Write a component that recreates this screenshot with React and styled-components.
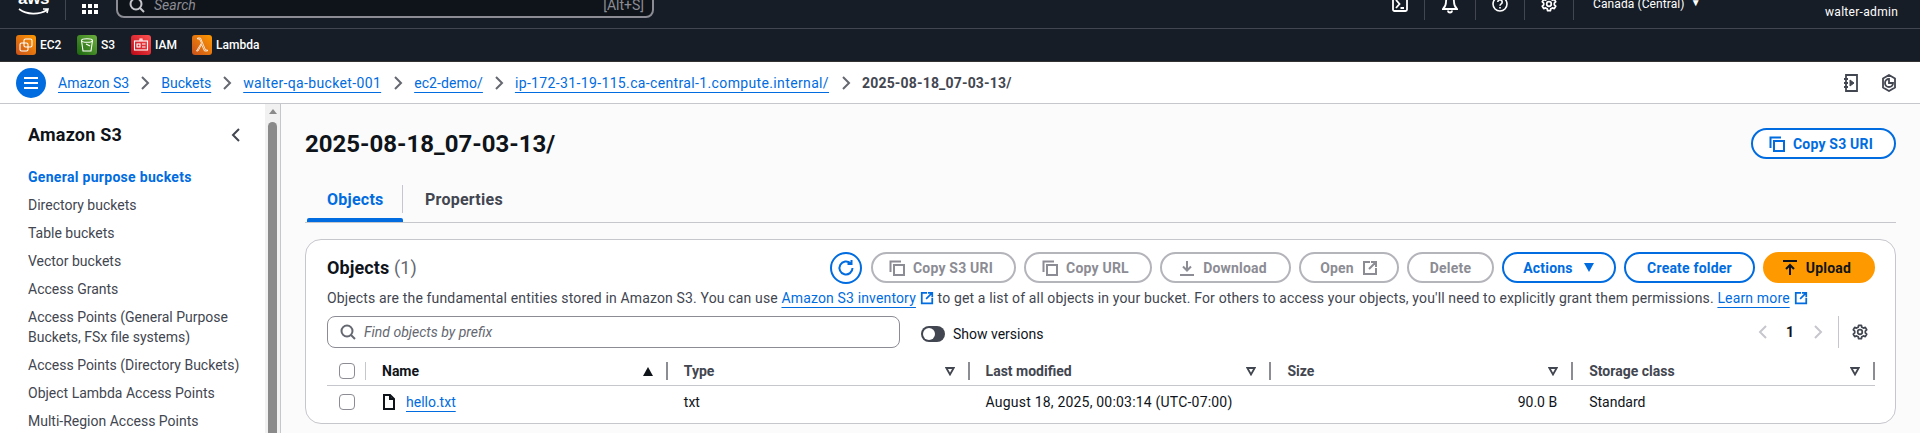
import React from 'react';
import styled, { createGlobalStyle } from 'styled-components';

const Global = createGlobalStyle`
  html, body { margin: 0; padding: 0; height: 433px; overflow: hidden; background: #fff; }
  body { font-family: Roboto, "Noto Sans", sans-serif; font-size: 14px; line-height: 20px; color: #0f141a; }
  * { box-sizing: border-box; }
`;

const Shell = styled.div`display: flex; flex-direction: column; height: 445px; margin-top: -12px; overflow: hidden;`;

const TopBar = styled.header`
  height: 41px; flex: none; background: #161d26; border-bottom: 1px solid #424650; display: flex; align-items: flex-start; color: #fff; font-size: 12px; position: relative;
`;
const LogoBox = styled.div`width: 66px; height: 32px; flex: none; border-right: 1px solid #424650; position: relative; padding-left: 18px;`;
const LogoText = styled.span`display: block; width: 30px; font-family: "Liberation Sans", sans-serif; font-weight: 700; font-size: 17px; line-height: 14px; letter-spacing: -.3px; margin-top: 4px; color: #fff;`;
const GridBtn = styled.div`width: 50px; flex: none; padding: 14px 0 0 16px;`;
const SearchBox = styled.div`
  width: 538px; height: 30px; flex: none; background: #0f141a; border: 2px solid #8c8c94; border-radius: 8px; display: flex; align-items: center; padding: 3px 8px 0 11px; gap: 9px; color: #8c8c94;
`;
const SearchHint = styled.span`font-style: italic; font-size: 14px; flex: 1; color: #8c8c94;`;
const SearchKey = styled.span`font-size: 14px;`;
const TopRight = styled.div`margin-left: auto; display: flex; align-items: flex-start;`;
const TopIcon = styled.div`width: ${p => p.$w}px; height: 32px; border-right: 1px solid #424650; display: flex; justify-content: center; padding-top: 8px;`;
const Region = styled.div`width: 251px; padding: 6px 0 0 19px; display: flex; gap: 6px; line-height: 20px; letter-spacing: .1px;`;
const Caret = styled.span`font-size: 10px; line-height: 18px;`;
const UserName = styled.div`width: 95px; padding: 14px 0 0 0; line-height: 20px; letter-spacing: .3px; white-space: nowrap;`;

const ServiceBar = styled.nav`height: 32px; flex: none; background: #161d26; display: flex; align-items: center; padding-left: 16px;`;
const Service = styled.div`display: flex; align-items: center; gap: 4px; width: ${p => p.$w}px; color: #fff; font-size: 12px; font-weight: 500;`;
const Tile = styled.span`width: 20px; height: 20px; border-radius: 3px; background: linear-gradient(45deg, ${p => p.$a}, ${p => p.$b}); display: flex; align-items: center; justify-content: center; flex: none;`;

const Crumbs = styled.div`height: 43px; flex: none; background: #fff; border-bottom: 1px solid #c6c6cd; border-top: 1px solid #333; display: flex; align-items: center; padding: 0 23px 0 16px;`;
const MenuBtn = styled.span`width: 30px; height: 30px; border-radius: 50%; background: #006ce0; display: flex; align-items: center; justify-content: center; flex: none; margin-right: 12px;`;
const Crumb = styled.a`color: #006ce0; text-decoration: underline; text-underline-offset: 4px; text-decoration-thickness: 1px; white-space: nowrap; letter-spacing: ${p => p.$ls}px;`;
const CrumbNow = styled.span`color: #424650; font-weight: 700; white-space: nowrap; letter-spacing: .18px;`;
const CrumbSep = styled.span`display: flex; width: ${p => p.$w || 32}px; justify-content: center; flex: none;`;
const CrumbTools = styled.div`margin-left: auto; display: flex; gap: 22px;`;

const Body = styled.div`flex: 1; display: flex; min-height: 0; background: #fbfbfb;`;
const Side = styled.aside`width: 281px; flex: none; display: flex; background: #fff; border-right: 1px solid #c6c6cd; overflow: hidden;`;
const SideInner = styled.div`width: 265px; flex: none; padding: 19px 0 0 28px;`;
const SideHead = styled.div`display: flex; align-items: center; justify-content: space-between; padding-right: 24px; height: 24px; margin-bottom: 20px;`;
const SideTitle = styled.h2`margin: 0; font-size: 18px; line-height: 24px; font-weight: 700; color: #0f141a; letter-spacing: .2px;`;
const SideList = styled.ul`list-style: none; margin: 0; padding: 0; display: flex; flex-direction: column; gap: 8px; width: 235px; white-space: pre-line;`;
const SideItem = styled.li`color: ${p => p.$on ? '#006ce0' : '#424650'}; font-weight: ${p => p.$on ? 700 : 400}; letter-spacing: ${p => p.$on ? '.3px' : '0'};`;
const Track = styled.div`width: 15px; flex: none; background: #f1f1f1; padding: 5px 3px 0; display: flex; flex-direction: column; align-items: center; gap: 8px;`;
const TrackArrow = styled.span`width: 0; height: 0; border: 4px solid transparent; border-top: 0; border-bottom: 5px solid #8a8a8a;`;
const Thumb = styled.div`width: 9px; flex: 1; background: #8a8a8a; border-radius: 5px 5px 0 0;`;

const Main = styled.main`flex: 1; min-width: 0; padding: 24px 24px 0; display: flex; flex-direction: column;`;
const HeadRow = styled.div`display: flex; justify-content: space-between; align-items: center; height: 31px;`;
const H1 = styled.h1`margin: 0; font-size: 24px; line-height: 30px; font-weight: 700; color: #0f141a;`;
const Btn = styled.button`
  height: 31px; width: ${p => p.$w}px; flex: none; border-radius: 16px; font: 700 14px/20px Roboto, sans-serif; letter-spacing: .2px; display: flex; align-items: center; justify-content: center; gap: ${p => p.$gap || 8}px; padding: 0 ${p => p.$icon ? 5 : 0}px 0 0;
  background: ${p => p.$kind === 'primary' ? '#ff9900' : '#fff'};
  border: 2px solid ${p => p.$kind === 'primary' ? '#ff9900' : p.$kind === 'off' ? '#b4b4bb' : '#006ce0'};
  color: ${p => p.$kind === 'primary' ? '#0f141a' : p.$kind === 'off' ? '#8c8c94' : '#006ce0'};
`;
const Tabs = styled.div`display: flex; margin-top: 24px; border-bottom: 1px solid #c6c6cd; flex: none; height: 40px;`;
const Tab = styled.div`
  display: flex; align-items: center; height: 39px; padding: 0 22px 5px; font-size: 16px; font-weight: 700; letter-spacing: .25px; position: relative;
  color: ${p => p.$on ? '#006ce0' : '#424650'};
  ${p => p.$on && `width: 98px; &::before { content: ""; position: absolute; left: 2px; right: 0; bottom: 0; height: 4px; background: #006ce0; border-radius: 2px 2px 0 0; } &::after { content: ""; position: absolute; right: 0; top: 2px; height: 28px; width: 1px; background: #c6c6cd; }`}
`;
const Card = styled.section`margin-top: 16px; height: 185px; background: #fff; border: 1px solid #c6c6cd; border-radius: 16px; padding: 12px 20px 0 21px; flex: none;`;
const CardHead = styled.div`display: flex; align-items: center; height: 31px;`;
const CardTitle = styled.h2`margin: 0; font-size: 18px; line-height: 24px; font-weight: 700; flex: 1; letter-spacing: .1px;`;
const Count = styled.span`font-weight: 400; color: #656871;`;
const Actions = styled.div`display: flex; gap: 8px; align-items: center;`;
const RoundBtn = styled.span`width: 32px; height: 32px; border-radius: 50%; border: 2px solid #006ce0; display: flex; align-items: center; justify-content: center; margin-right: 1px;`;
const Desc = styled.p`margin: 5px 0 0; color: #424650; white-space: nowrap; letter-spacing: .15px;`;
const Link = styled.a`color: #006ce0; text-decoration: underline; text-underline-offset: 4px; text-decoration-thickness: 1px;`;
const LinkIcon = styled.span`display: inline-block; vertical-align: -2px; margin-left: 4px; line-height: 0;`;
const ToolRow = styled.div`display: flex; align-items: center; height: 32px; margin-top: 8px;`;
const SearchField = styled.div`width: 573px; height: 32px; border: 1px solid #8c8c94; border-radius: 8px; display: flex; align-items: center; padding: 0 12px; gap: 8px; flex: none; background: #fff;`;
const Placeholder = styled.span`font-style: italic; color: #656871; font-size: 14px;`;
const ToggleWrap = styled.label`display: flex; align-items: center; gap: 8px; margin: 4px 0 0 21px; flex: 1;`;
const Toggle = styled.span`width: 24px; height: 16px; border-radius: 8px; background: #424650; display: flex; align-items: center; padding-left: 2px;`;
const Knob = styled.span`width: 12px; height: 12px; border-radius: 50%; background: #fff;`;
const Pager = styled.div`display: flex; align-items: center; height: 32px; width: 126px;`;
const PageBtn = styled.span`width: 27px; display: flex; justify-content: center;`;
const PageNum = styled.span`font-weight: 700; text-align: center; width: 28px; color: #0f141a;`;
const PagerSep = styled.span`margin-left: 7px; width: 1px; height: 32px; background: #c6c6cd;`;
const PagerGear = styled.span`flex: 1; display: flex; justify-content: center; padding-left: 6px;`;

const Row = styled.div`
  display: grid; grid-template-columns: 39px repeat(5, 1fr);
  height: ${p => p.$head ? 26 : 32}px;
  ${p => p.$head && 'margin-top: 12px; border-bottom: 1px solid #c6c6cd; padding-bottom: 5px; font-weight: 700;'}
`;
const Cell = styled.div`
  display: flex; align-items: center; padding-left: ${p => p.$check ? 12 : 16}px; gap: ${p => p.$gap || 8}px; padding-right: ${p => p.$check ? 0 : 16}px; min-width: 0; white-space: nowrap; letter-spacing: ${p => p.$ls || 0}px;
  justify-content: ${p => p.$right ? 'flex-end' : 'flex-start'};
`;
const HeadCell = styled(Cell)`
  justify-content: space-between; position: relative; color: ${p => p.$sorted ? '#0f141a' : '#424650'}; padding-right: 15px;
  padding-top: ${p => p.$check ? 0 : 1}px;
  &::after { content: ""; position: absolute; right: 0; top: 2px; height: 18px; width: ${p => p.$check ? 1 : 2}px; background: ${p => p.$check ? '#c6c6cd' : '#8c8c94'}; }
`;
const Check = styled.span`width: 16px; height: 16px; border: 1px solid #8c8c94; border-radius: 4px; background: #fff; flex: none;`;

const S = { fill: 'none', strokeWidth: 2 };
const Copy = ({ c }) => <svg width="16" height="16" viewBox="0 0 16 16" {...S} stroke={c}><path d="M1.5 12V1.5H12" /><rect x="5" y="5" width="10" height="10" /></svg>;
const Ext = ({ c = '#006ce0', s = 14 }) => <svg width={s} height={s} viewBox="0 0 16 16" {...S} stroke={c}><path d="M8 2H2v12h12V8M9 2h5v5M14 2 7 9" /></svg>;
const Chev = ({ d = 'r', c = '#656871', w = 2, h = 16 }) => <svg width="10" height={h} viewBox="0 0 10 16" fill="none" stroke={c} strokeWidth={w}><path d={d === 'r' ? 'M2 2l6 6-6 6' : 'M8 2 2 8l6 6'} /></svg>;
const Gear = ({ c, s = 16 }) => <svg width={s} height={s} viewBox="0 0 16 16" fill="none" stroke={c} strokeWidth="1.7" strokeLinejoin="round"><path d="M6.600 1.300h2.800l.4 1.900 1.700.9 1.800-.7 1.400 2.400-1.400 1.300v1.800l1.400 1.300-1.400 2.400-1.800-.7-1.700.9-.4 1.900H6.600l-.4-1.900-1.700-.9-1.800.7-1.400-2.400 1.400-1.300V7.100L1.300 5.800l1.400-2.400 1.800.7 1.700-.9z" /><circle cx="8" cy="8" r="2.300" /></svg>;
const SearchIcon = ({ c }) => <svg width="16" height="16" viewBox="0 0 16 16" fill="none" stroke={c} strokeWidth="2"><circle cx="7" cy="7" r="5.500" /><path d="M11 11l4 4" /></svg>;
const SortDown = () => <svg width="10" height="9" viewBox="0 0 10 9" fill="none" stroke="#424650" strokeWidth="1.800"><path d="M1.300 1h7.400L5 7.500z" /></svg>;
const SortUp = () => <svg width="10" height="9" viewBox="0 0 10 9" fill="#0f141a"><path d="M0 9h10L5 0z" /></svg>;

const services = [
  { n: 'EC2', w: 61, a: '#c8511b', b: '#ff9900', g: <g stroke="#fff" fill="none" strokeWidth="1.100"><rect x="8" y="4" width="8" height="8" rx="1.500" /><rect x="4" y="8" width="8" height="8" rx="1.500" /></g> },
  { n: 'S3', w: 54, a: '#1b660f', b: '#6cae3e', g: <g stroke="#fff" fill="none" strokeWidth="1.100"><ellipse cx="10" cy="5.500" rx="5.500" ry="1.800" /><path d="M4.500 5.500 6 16h8l1.500-10.500M9 9l4 2" /></g> },
  { n: 'IAM', w: 61, a: '#bd0816', b: '#ff5252', g: <g stroke="#fff" fill="none" strokeWidth="1.100"><rect x="3.500" y="6" width="13" height="9" /><rect x="6" y="9" width="3" height="3" /><path d="M11 9h3.500M11 12h3.500M9 6V4h2v2" /></g> },
  { n: 'Lambda', w: 70, a: '#c8511b', b: '#ff9900', g: <path d="M4.500 16 9.500 8 7.500 4H5.500V3h3l5 12h2v1h-3L9.500 9.500 6 16z" stroke="#fff" fill="none" strokeWidth=".8" /> },
];
const nav = ['Directory buckets', 'Table buckets', 'Vector buckets', 'Access Grants', 'Access Points (General Purpose\nBuckets, FSx file systems)', 'Access Points (Directory Buckets)', 'Object Lambda Access Points', 'Multi-Region Access Points'];
const crumbs = [['Amazon S3', 32, 0], ['Buckets', 32, 0], ['walter-qa-bucket-001', 33, .35], ['ec2-demo/', 32, .1], ['ip-172-31-19-115.ca-central-1.compute.internal/', 33, .36]];
const cols = [['Type', 'txt'], ['Last modified', 'August 18, 2025, 00:03:14 (UTC-07:00)', .2], ['Size', '90.0 B'], ['Storage class', 'Standard']];

export default function App() {
  return (
    <Shell>
      <Global />
      <TopBar>
        <LogoBox>
          <LogoText>aws</LogoText>
          <svg width="32" height="9" viewBox="0 0 32 9" fill="none" stroke="#fff" strokeWidth="1.600" style={{ display: 'block', marginTop: 2 }}><path d="M1 1c8 6 20 6 28 1M25 1h5l-1 4" /></svg>
        </LogoBox>
        <GridBtn>
          <svg width="16" height="12" viewBox="0 0 16 12" fill="#fff">{[0, 6, 12].flatMap(x => [0, 6].map(y => <rect key={`${x}${y}`} x={x} y={y} width="4" height="4" />))}</svg>
        </GridBtn>
        <SearchBox>
          <SearchIcon c="#c6c6cd" />
          <SearchHint>Search</SearchHint>
          <SearchKey>[Alt+S]</SearchKey>
        </SearchBox>
        <TopRight>
          <TopIcon $w={50}><svg width="16" height="16" viewBox="0 0 16 16" fill="none" stroke="#fff" strokeWidth="1.800"><rect x="1" y="1" width="14" height="14" rx="1.500" /><path d="M4 4l3.500 4L4 12M8.500 12H12" /></svg></TopIcon>
          <TopIcon $w={51}><svg width="16" height="18" viewBox="0 0 16 18" fill="none" stroke="#fff" strokeWidth="1.800"><path d="M8 1c-3 0-4 2-4 5 0 4-1 5-3 7h14c-2-2-3-3-3-7 0-3-1-5-4-5zM6 14.500a2 2 0 0 0 4 0" /></svg></TopIcon>
          <TopIcon $w={49}><svg width="16" height="16" viewBox="0 0 16 16" fill="none" stroke="#fff" strokeWidth="1.600"><circle cx="8" cy="8" r="7" /><path d="M5.800 6a2.200 2.200 0 1 1 3.400 1.900C8.400 8.400 8 8.800 8 9.800M8 11v1.500" /></svg></TopIcon>
          <TopIcon $w={49}><Gear c="#fff" /></TopIcon>
          <Region>Canada (Central)<Caret>▼</Caret></Region>
          <UserName>walter-admin</UserName>
        </TopRight>
      </TopBar>
      <ServiceBar>
        {services.map(s => (
          <Service key={s.n} $w={s.w}>
            <Tile $a={s.a} $b={s.b}><svg width="20" height="20" viewBox="0 0 20 20">{s.g}</svg></Tile>
            {s.n}
          </Service>
        ))}
      </ServiceBar>
      <Crumbs>
        <MenuBtn><svg width="14" height="12" viewBox="0 0 14 12" stroke="#fff" strokeWidth="2"><path d="M0 1h14M0 6h14M0 11h14" /></svg></MenuBtn>
        {crumbs.map(([t, w, ls]) => (
          <React.Fragment key={t}>
            <Crumb $ls={ls}>{t}</Crumb>
            <CrumbSep $w={w}><Chev /></CrumbSep>
          </React.Fragment>
        ))}
        <CrumbNow>2025-08-18_07-03-13/</CrumbNow>
        <CrumbTools>
          <svg width="16" height="18" viewBox="0 0 16 18" fill="none" stroke="#424650" strokeWidth="1.800"><path d="M3 1h11v16H3zM1 5h4M1 9h4M1 13h4" /><path d="M7 6v6l4-3z" fill="#424650" strokeWidth="1" /></svg>
          <svg width="16" height="18" viewBox="0 0 16 18" fill="none" stroke="#424650" strokeWidth="1.800"><path d="M8 1l6 3.500v9L8 17l-6-3.500v-9zM8 5a4 4 0 1 0 4 4H8z" /></svg>
        </CrumbTools>
      </Crumbs>
      <Body>
        <Side>
          <SideInner>
            <SideHead>
              <SideTitle>Amazon S3</SideTitle>
              <Chev d="l" c="#424650" />
            </SideHead>
            <SideList>
              <SideItem $on>General purpose buckets</SideItem>
              {nav.map(n => <SideItem key={n}>{n}</SideItem>)}
            </SideList>
          </SideInner>
          <Track><TrackArrow /><Thumb /></Track>
        </Side>
        <Main>
          <HeadRow>
            <H1>2025-08-18_07-03-13/</H1>
            <Btn $w={145} $icon><Copy c="#006ce0" />Copy S3 URI</Btn>
          </HeadRow>
          <Tabs>
            <Tab $on>Objects</Tab>
            <Tab>Properties</Tab>
          </Tabs>
          <Card>
            <CardHead>
              <CardTitle>Objects <Count>(1)</Count></CardTitle>
              <Actions>
                <RoundBtn><svg width="18" height="18" viewBox="0 0 18 18" fill="none" stroke="#006ce0" strokeWidth="2"><path d="M15.500 9a6.500 6.500 0 1 1-2-4.700M14.500 1v4h-4" /></svg></RoundBtn>
                <Btn $w={145} $kind="off" $icon><Copy c="#8c8c94" />Copy S3 URI</Btn>
                <Btn $w={128} $kind="off" $icon><Copy c="#8c8c94" />Copy URL</Btn>
                <Btn $w={131} $kind="off" $icon><svg width="16" height="16" viewBox="0 0 16 16" fill="none" stroke="#8c8c94" strokeWidth="2"><path d="M8 1v9M4 6.500 8 10.500l4-4M1 15h14" /></svg>Download</Btn>
                <Btn $w={100} $kind="off">Open<Ext c="#8c8c94" s={16} /></Btn>
                <Btn $w={87} $kind="off">Delete</Btn>
                <Btn $w={114} $gap={10}>Actions<svg width="12" height="10" viewBox="0 0 12 10" fill="#006ce0"><path d="M1 0h10L6 9z" /></svg></Btn>
                <Btn $w={131}>Create folder</Btn>
                <Btn $w={112} $kind="primary" $icon><svg width="16" height="16" viewBox="0 0 16 16" fill="none" stroke="#0f141a" strokeWidth="2"><path d="M1 1h14M8 15V5M4 9l4-4 4 4" /></svg>Upload</Btn>
              </Actions>
            </CardHead>
            <Desc>
              Objects are the fundamental entities stored in Amazon S3. You can use <Link>Amazon S3 inventory</Link><LinkIcon><Ext /></LinkIcon>{' '}
              to get a list of all objects in your bucket. For others to access your objects, you'll need to explicitly grant them permissions. <Link>Learn more</Link><LinkIcon><Ext /></LinkIcon>
            </Desc>
            <ToolRow>
              <SearchField><SearchIcon c="#656871" /><Placeholder>Find objects by prefix</Placeholder></SearchField>
              <ToggleWrap><Toggle><Knob /></Toggle>Show versions</ToggleWrap>
              <Pager>
                <PageBtn><Chev d="l" c="#c6c6cd" /></PageBtn>
                <PageNum>1</PageNum>
                <PageBtn><Chev c="#c6c6cd" /></PageBtn>
                <PagerSep />
                <PagerGear><Gear c="#424650" /></PagerGear>
              </Pager>
            </ToolRow>
            <Row $head>
              <HeadCell $check><Check /></HeadCell>
              <HeadCell $sorted>Name<SortUp /></HeadCell>
              {cols.map(([h]) => <HeadCell key={h}>{h}<SortDown /></HeadCell>)}
            </Row>
            <Row>
              <Cell $check><Check /></Cell>
              <Cell $gap={10}><svg width="14" height="16" viewBox="0 0 14 16" fill="none" stroke="#0f141a" strokeWidth="2"><path d="M2 1h6l4 4v10H2zM8 1v4h4" /></svg><Link>hello.txt</Link></Cell>
              {cols.map(([h, v, ls]) => <Cell key={h} $ls={ls} $right={h === 'Size'}>{v}</Cell>)}
            </Row>
          </Card>
        </Main>
      </Body>
    </Shell>
  );
}
